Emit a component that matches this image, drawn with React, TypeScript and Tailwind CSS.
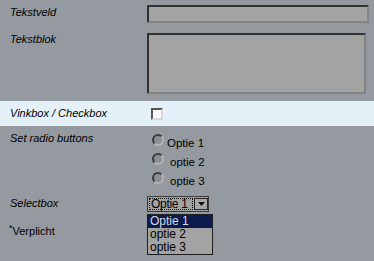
import React from 'react';

const inset =
  'border-2 border-t-[#323232] border-l-[#323232] border-b-[#838383] border-r-[#838383] bg-[#a3a3a3]';

function Radio({ label, indent }: { label: string; indent?: boolean }) {
  return (
    <div className="flex h-[19px] items-start">
      <div className="w-[12px] h-[12px] rounded-full border-2 border-t-[#3c3c3c] border-l-[#3c3c3c] border-b-[#b4b4b4] border-r-[#b4b4b4] bg-[#8c9095]" />
      <span className={`${indent ? 'ml-[6px]' : 'ml-[3px]'} mt-[3px] leading-[13px] text-[11.5px]`}>{label}</span>
    </div>
  );
}

export default function App() {
  const options = ['Optie 1', 'optie 2', 'optie 3'];

  return (
    <div className="relative w-[374px] h-[261px] overflow-hidden bg-[#949aa0] text-[11px] text-black font-['Liberation_Sans',Arial,sans-serif]">
      {/* Tekstveld */}
      <div className="flex pt-[5px]">
        <div className="w-[147px] pl-[10px] pt-[1px] italic leading-[13px]">Tekstveld</div>
        <div className={`w-[222px] h-[18px] ${inset}`} />
      </div>

      {/* Tekstblok */}
      <div className="flex mt-[10px]">
        <div className="w-[147px] pl-[10px] italic leading-[13px]">Tekstblok</div>
        <div className={`w-[219px] h-[61px] ${inset}`} />
      </div>

      {/* Checkbox */}
      <div className="flex items-center mt-[7px] h-[25px] bg-[#e5f1f9]">
        <div className="w-[147px] pl-[10px] italic leading-[13px]">Vinkbox / Checkbox</div>
        <div className="ml-[4px] w-[12px] h-[12px] border-2 border-t-[#555] border-l-[#555] border-b-[#d8d8d8] border-r-[#d8d8d8] bg-[#fbfbfb]" />
      </div>

      {/* Radio buttons */}
      <div className="flex mt-[6px]">
        <div className="w-[147px] pl-[10px] italic leading-[13px]">Set radio buttons</div>
        <div className="ml-[5px] pt-[2px] flex flex-col">
          <Radio label="Optie 1" />
          <Radio label="optie 2" indent />
          <Radio label="optie 3" indent />
        </div>
      </div>

      {/* Selectbox */}
      <div className="flex mt-[5px]">
        <div className="w-[147px] pl-[10px] pt-[1px] italic leading-[13px]">Selectbox</div>
        <div className="relative">
          <div className="flex items-center w-[62px] h-[16px] border border-[#3a3a3a] bg-[#a3a3a3]">
            <div className="ml-[1px] h-[12px] w-[44px] border border-dotted border-black flex items-center pl-[1px] text-[12px] leading-[12px] tracking-[-0.3px] whitespace-nowrap">
              Optie 1
            </div>
            <div className="ml-[1px] w-[14px] h-[12px] border border-[#2a2a2a] bg-[#a8a8a8] flex items-center justify-center">
              <svg width="7" height="4" viewBox="0 0 7 4">
                <path d="M0 0h7L3.5 4z" fill="#111" />
              </svg>
            </div>
          </div>

          {/* open list */}
          <div className="absolute left-0 top-[18px] w-[66px] border border-[#1e1e1e] bg-[#a3a3a3]">
            {options.map((o, i) => (
              <div
                key={o}
                className={`h-[13px] pl-[2px] text-[12px] leading-[13px] ${
                  i === 0 ? 'bg-[#0c1b4e] text-[#d4d8e2]' : 'text-black'
                }`}
              >
                {o}
              </div>
            ))}
          </div>
        </div>
      </div>

      {/* Verplicht */}
      <div className="mt-[13px] pl-[9px] leading-[13px]">
        <span className="relative -top-[4px] text-[9px]">*</span>Verplicht
      </div>
    </div>
  );
}
